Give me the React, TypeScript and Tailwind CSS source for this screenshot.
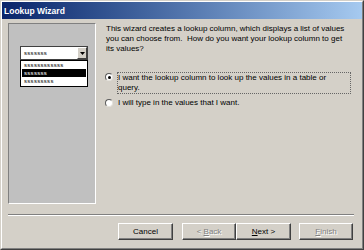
import React from "react";

function Btn({ children, w, disabled }: { children: React.ReactNode; w: string; disabled?: boolean }) {
  return (
    <div
      className={`${w} h-[17px] bg-[#D4D0C8] border border-t-white border-l-white border-r-[#404040] border-b-[#404040] shadow-[inset_-1px_-1px_0_#808080] flex items-center justify-center text-[8px] leading-[10px] ${
        disabled ? "text-[#808080] [text-shadow:1px_1px_0_#ffffff]" : "text-black"
      }`}
    >
      <span className="whitespace-pre">{children}</span>
    </div>
  );
}

function Radio({ checked }: { checked?: boolean }) {
  return (
    <div className="w-[8px] h-[8px] shrink-0 rounded-full bg-white border border-t-[#5a5a5a] border-l-[#5a5a5a] border-r-[#e4e2dc] border-b-[#e4e2dc] flex items-center justify-center">
      {checked && <div className="w-[3px] h-[3px] rounded-full bg-black" />}
    </div>
  );
}

export default function App() {
  return (
    <div className="w-[364px] h-[250px] bg-[#D4D0C8] border border-t-[#D4D0C8] border-l-[#D4D0C8] border-r-[#404040] border-b-[#404040] font-['Liberation_Sans',Arial,sans-serif] text-black">
      <div className="w-full h-full flex flex-col border border-t-white border-l-white border-r-[#808080] border-b-[#808080]">
        {/* Title bar */}
        <div className="h-[17px] shrink-0 bg-gradient-to-r from-[#0A246A] to-[#A6CAF0] flex items-center pl-[2px]">
          <span className="text-white font-bold text-[8.5px] leading-[10px]">Lookup Wizard</span>
        </div>

        {/* Body */}
        <div className="flex-1 flex flex-col pl-[6px] pr-[8px]">
          <div className="flex mt-[4px]">
            {/* Left picture panel */}
            <div className="w-[88px] h-[181px] shrink-0 bg-[#C0C0C0] border border-t-[#808080] border-l-[#808080] border-r-white border-b-white flex flex-col pl-[11px] pt-[22px]">
              <div className="w-[68px] h-[14px] bg-white border border-[#404040] flex items-center">
                <span className="pl-[3px] flex-1 text-[6px] leading-[8px] tracking-[0.3px]">sssssss</span>
                <div className="w-[10px] h-[12px] bg-[#D4D0C8] border border-t-white border-l-white border-r-[#404040] border-b-[#404040] flex items-center justify-center">
                  <svg width="5" height="3" viewBox="0 0 5 3">
                    <path d="M0 0H5L2.5 3Z" fill="#000" />
                  </svg>
                </div>
              </div>
              <div className="w-[68px] h-[27px] bg-white border border-black flex flex-col py-[0px]">
                <div className="h-[8px] mx-[1px] pl-[2px] text-[6px] leading-[8px] tracking-[0.3px]">ssssssssssss</div>
                <div className="h-[8px] mx-[1px] pl-[2px] bg-black text-white text-[6px] leading-[8px] tracking-[0.3px]">sssssss</div>
                <div className="h-[8px] mx-[1px] pl-[2px] text-[6px] leading-[8px] tracking-[0.3px]">sssssssss</div>
              </div>
            </div>

            {/* Right content */}
            <div className="ml-[10px] flex flex-col text-[8px] leading-[10px]">
              <div className="mt-[1px] whitespace-pre">
                This wizard creates a lookup column, which displays a list of values
                <br />
                {"you can choose from.  How do you want your lookup column to get"}
                <br />
                its values?
              </div>

              <div className="mt-[18px] flex items-start -ml-px">
                <div className="mt-[1px]">
                  <Radio checked />
                </div>
                <div className="ml-[4px] w-[234px] border border-dotted border-[#666666] whitespace-pre">
                  I want the lookup column to look up the values in a table or
                  <br />
                  query.
                </div>
              </div>

              <div className="mt-[4px] flex items-center -ml-px h-[10px]">
                <Radio />
                <div className="ml-[5px] whitespace-pre">I will type in the values that I want.</div>
              </div>
            </div>
          </div>

          {/* Separator */}
          <div className="mt-[10px] h-0 border-t border-t-[#808080] border-b border-b-white" />

          {/* Buttons */}
          <div className="mt-[7px] flex justify-end mr-[1px]">
            <Btn w="w-[55px]">Cancel</Btn>
            <div className="w-[9px]" />
            <Btn w="w-[54px]" disabled>
              {"< "}<u>B</u>ack
            </Btn>
            <Btn w="w-[55px]">
              <u>N</u>ext {">"}
            </Btn>
            <div className="w-[8px]" />
            <Btn w="w-[54px]" disabled>
              <u>F</u>inish
            </Btn>
          </div>
        </div>
      </div>
    </div>
  );
}
